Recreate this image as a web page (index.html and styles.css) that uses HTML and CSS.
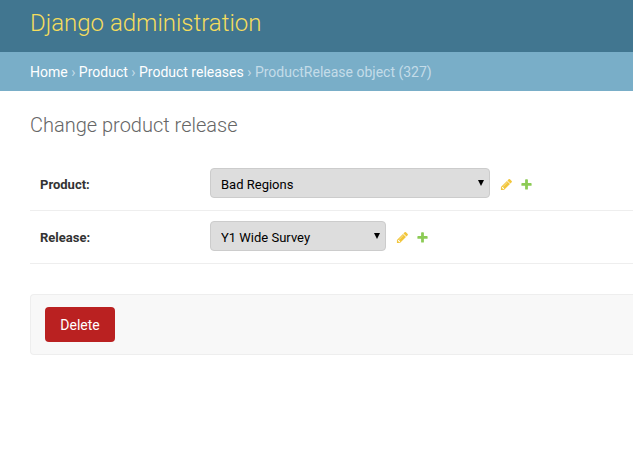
FILE: index.html
```html
<!DOCTYPE html>
<html lang="en">
<head>
<meta charset="utf-8">
<title>Change product release | Django administration</title>
<link rel="stylesheet" href="styles.css">
</head>
<body>
<header class="header"><h1 class="brand"><a href="#">Django administration</a></h1></header>
<nav class="breadcrumbs" aria-label="Breadcrumbs"><a href="#">Home</a> › <a href="#">Product</a> › <a href="#">Product releases</a> › ProductRelease object (327)</nav>
<main class="content">
<h2 class="title">Change product release</h2>
<form>
<div class="row">
<label class="label" for="product">Product:</label>
<select class="select select-wide" id="product"><option>Bad Regions</option></select>
<a class="icon" href="#" aria-label="Change product"><svg viewBox="0 0 1792 1792"><path fill="#efb80b" d="M491 1536l91-91-235-235-91 91v107h128v128h107zm523-928q0-22-22-22-10 0-17 7l-542 542q-7 7-7 17 0 22 22 22 10 0 17-7l542-542q7-7 7-17zm-54-192l416 416-832 832h-416v-416zm683 96q0 53-37 90l-166 166-416-416 166-165q36-38 90-38 53 0 91 38l235 234q37 39 37 91z"/></svg></a>
<a class="icon" href="#" aria-label="Add product"><svg viewBox="0 0 1792 1792"><path fill="#70bf2b" d="M1600 796v192q0 40-28 68t-68 28h-416v416q0 40-28 68t-68 28h-192q-40 0-68-28t-28-68v-416h-416q-40 0-68-28t-28-68v-192q0-40 28-68t68-28h416v-416q0-40 28-68t68-28h192q40 0 68 28t28 68v416h416q40 0 68 28t28 68z"/></svg></a>
</div>
<div class="row">
<label class="label" for="release">Release:</label>
<select class="select select-narrow" id="release"><option>Y1 Wide Survey</option></select>
<a class="icon" href="#" aria-label="Change release"><svg viewBox="0 0 1792 1792"><path fill="#efb80b" d="M491 1536l91-91-235-235-91 91v107h128v128h107zm523-928q0-22-22-22-10 0-17 7l-542 542q-7 7-7 17 0 22 22 22 10 0 17-7l542-542q7-7 7-17zm-54-192l416 416-832 832h-416v-416zm683 96q0 53-37 90l-166 166-416-416 166-165q36-38 90-38 53 0 91 38l235 234q37 39 37 91z"/></svg></a>
<a class="icon" href="#" aria-label="Add release"><svg viewBox="0 0 1792 1792"><path fill="#70bf2b" d="M1600 796v192q0 40-28 68t-68 28h-416v416q0 40-28 68t-68 28h-192q-40 0-68-28t-28-68v-416h-416q-40 0-68-28t-28-68v-192q0-40 28-68t68-28h416v-416q0-40 28-68t68-28h192q40 0 68 28t28 68v416h416q40 0 68 28t28 68z"/></svg></a>
</div>
<div class="submit-row"><button class="delete" type="button">Delete</button></div>
</form>
</main>
</body>
</html>
```
FILE: styles.css
```css
* { box-sizing: border-box; }
body { margin: 0; background: #fff; color: #333; font-family: Roboto, "Liberation Sans", sans-serif; font-size: 14px; }
a { text-decoration: none; }
.header { background: #417690; padding: 8px 30px 14px; }
.brand { margin: 0; font-size: 24px; font-weight: 300; line-height: 30px; }
.brand a { color: #f5dd5d; }
.breadcrumbs { background: #79aec8; color: #c4dce8; padding: 11px 30px 9px; line-height: 19px; white-space: nowrap; overflow: hidden; }
.breadcrumbs a { color: #fff; }
.content { padding: 22px 0 0 30px; }
.title { margin: 0 0 20px; font-size: 20px; font-weight: 300; line-height: 25px; color: #666; }
.row { display: flex; align-items: center; padding: 10px; border-bottom: 1px solid #eee; }
.label { width: 170px; font-size: 13px; font-weight: 700; color: #333; }
.select { appearance: none; height: 30px; margin: 0 0 2px; padding: 2px 10px 0; border: 1px solid #ccc; border-radius: 4px; font: 13px Roboto, sans-serif; color: #000;
  background: #ddd url("data:image/svg+xml,%3Csvg xmlns='http://www.w3.org/2000/svg' width='6' height='6'%3E%3Cpath d='M0 0h6L3 6z'/%3E%3C/svg%3E") no-repeat right 5px center; }
.select-wide { width: 280px; }
.select-narrow { width: 176px; }
.icon { display: flex; margin-left: 7px; opacity: .8; }
.select + .icon { margin-left: 10px; }
.icon svg { width: 13px; height: 13px; }
.submit-row { margin-top: 30px; padding: 12px 14px; background: #f8f8f8; border: 1px solid #eee; border-right: 0; border-radius: 4px 0 0 4px; }
.delete { display: block; min-width: 70px; height: 35px; padding: 0 15px; border: 0; border-radius: 4px; background: #ba2121; color: #fff; font: 14px Roboto, sans-serif; }
```
